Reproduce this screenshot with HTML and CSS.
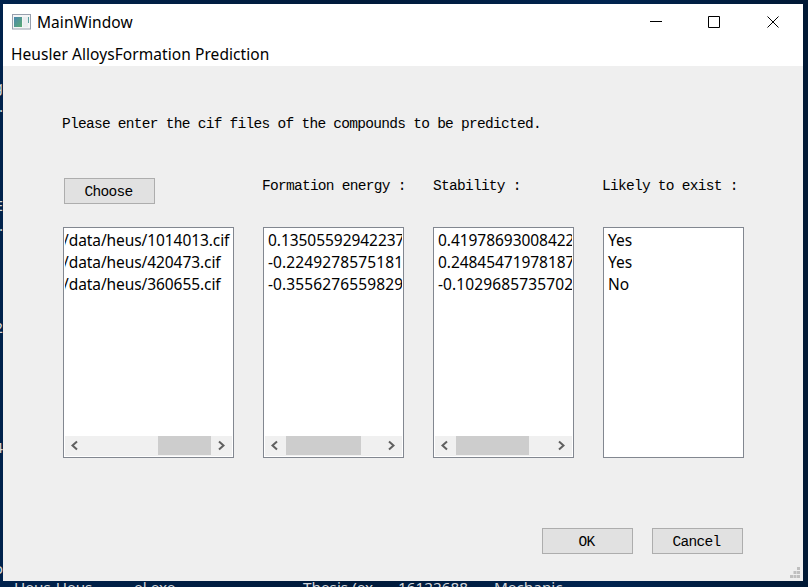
FILE: index.html
```html
<!DOCTYPE html>
<html lang="en">
<head>
<meta charset="utf-8">
<title>MainWindow</title>
<link rel="stylesheet" href="styles.css">
</head>
<body>
<div class="desk" aria-hidden="true">
  <span class="edge e1">g</span><span class="edge e2">.</span>
  <span class="edge e3">E</span><span class="edge e4">.</span>
  <span class="edge e5">2</span><span class="edge e6">4</span>
  <span class="edge e7">o</span>
  <span class="file f1">Heus-Heus</span>
  <span class="file f2">el.exe</span>
  <span class="file f3">Thesis (ex</span>
  <span class="file f4">16122688</span>
  <span class="file f5">Mechanic</span>
</div>
<main class="window">
  <header class="titlebar">
    <svg class="appicon" width="19" height="16" viewBox="0 0 19 16">
      <defs><linearGradient id="g" x1="0" y1="0" x2="1" y2="1"><stop offset="0" stop-color="#4a86b0"/><stop offset="1" stop-color="#5aab72"/></linearGradient></defs>
      <rect x=".5" y=".5" width="18" height="14.5" fill="#f4f5f6" stroke="#98a0ae"/>
      <rect x="2" y="3" width="8" height="10" fill="url(#g)"/>
      <rect x="11" y="3" width="5" height="10" fill="#e9edef"/>
      <rect x="16" y="3" width="1" height="6" fill="#5c9fa0"/>
    </svg>
    <span class="title">MainWindow</span>
    <svg class="controls" width="130" height="14" viewBox="0 0 130 14" fill="none" stroke="#000">
      <path d="M0 6.5h12M58.5 1.5h11v11h-11z"/>
      <path d="M117.500 1.500l11 11M128.500 1.500l-11 11"/>
    </svg>
  </header>
  <nav class="menu">Heusler AlloysFormation Prediction</nav>
  <section class="content">
    <p class="prompt">Please enter the cif files of the compounds to be predicted.</p>
    <div class="columns">
      <div class="col">
        <div class="head"><button class="btn">Choose</button></div>
        <div class="list">
          <div class="rows paths"><div>/data/heus/1014013.cif</div><div>/data/heus/420473.cif</div><div>/data/heus/360655.cif</div></div>
          <div class="scroll">
            <svg class="arrow" viewBox="0 0 21 20"><path d="M12 5.500L7.500 9.500l4.500 4"/></svg>
            <div class="track"><div class="thumb t1"></div></div>
            <svg class="arrow" viewBox="0 0 21 20"><path d="M8 5.500L12.500 9.500 8 13.500"/></svg>
          </div>
        </div>
      </div>
      <div class="col">
        <div class="head">Formation energy :</div>
        <div class="list">
          <div class="rows"><div>0.13505592942237</div><div class="neg">-0.2249278575181</div><div class="neg">-0.3556276559829</div></div>
          <div class="scroll">
            <svg class="arrow" viewBox="0 0 21 20"><path d="M12 5.500L7.500 9.500l4.500 4"/></svg>
            <div class="track"><div class="thumb t2"></div></div>
            <svg class="arrow" viewBox="0 0 21 20"><path d="M8 5.500L12.500 9.500 8 13.500"/></svg>
          </div>
        </div>
      </div>
      <div class="col">
        <div class="head shift">Stability :</div>
        <div class="list">
          <div class="rows"><div>0.41978693008422</div><div>0.24845471978187</div><div class="neg">-0.1029685735702</div></div>
          <div class="scroll">
            <svg class="arrow" viewBox="0 0 21 20"><path d="M12 5.500L7.500 9.500l4.500 4"/></svg>
            <div class="track"><div class="thumb t3"></div></div>
            <svg class="arrow" viewBox="0 0 21 20"><path d="M8 5.500L12.500 9.500 8 13.500"/></svg>
          </div>
        </div>
      </div>
      <div class="col">
        <div class="head">Likely to exist :</div>
        <div class="list"><div class="rows"><div>Yes</div><div>Yes</div><div>No</div></div></div>
      </div>
    </div>
    <div class="actions"><button class="btn">OK</button><button class="btn">Cancel</button></div>
  </section>
  <svg class="grip" width="10" height="11" viewBox="0 0 10 11" fill="#bfbfbf">
    <path d="M7 0h3v3H7zM7 4h3v3H7zM7 8h3v3H7zM3.500 4h3v3h-3zM3.500 8h3v3h-3zM0 8h3v3H0z"/>
  </svg>
</main>
</body>
</html>
```
FILE: styles.css
```css
* { box-sizing: border-box; }
body {
  margin: 0;
  width: 808px;
  height: 587px;
  padding: 4px 5px 6px 3px;
  overflow: hidden;
  position: relative;
  background: linear-gradient(90deg, #00224c 0, #001a3a 45%, #002450 75%, #001834 100%);
  font-family: "Noto Sans", "Open Sans", sans-serif;
  font-size: 15.5px;
  color: #000;
}
.desk { position: absolute; inset: 0; overflow: hidden; color: #d5d8dc; font-size: 15.3px; }
.edge, .file { position: absolute; line-height: 20px; white-space: nowrap; }
.edge { right: 805px; }
.e1 { top: 76px; } .e2 { top: 96px; }
.e3 { top: 195px; } .e4 { top: 215px; }
.e5 { top: 317px; } .e6 { top: 437px; } .e7 { top: 558px; }
.file { top: 577px; }
.f1 { left: 14px; } .f2 { left: 134px; } .f3 { left: 303px; }
.f4 { left: 398px; } .f5 { left: 494px; }

.window {
  position: relative;
  width: 800px;
  height: 577px;
  background: #efefef;
  display: flex;
  flex-direction: column;
}
.titlebar {
  height: 37px;
  flex: none;
  display: flex;
  align-items: center;
  padding: 0 23px 0 9px;
  background: #fff;
}
.appicon { margin-top: -1px; }
.title { margin: -2px 0 0 6px; letter-spacing: 0.05px; }
.controls { margin-left: auto; margin-top: -1px; }
.menu {
  height: 25px;
  flex: none;
  padding-left: 8px;
  line-height: 27px;
  background: #fff;
  white-space: nowrap;
  letter-spacing: 0.07px;
}
.content { flex: 1; padding: 48px 60px 0 59px; }
.prompt, .head, .btn {
  font-family: "Liberation Mono", monospace;
  font-size: 14.5px;
  letter-spacing: -0.72px;
}
.prompt { margin: 0; line-height: 20px; white-space: nowrap; }
.columns {
  display: grid;
  grid-template-columns: 171px 141px 141px 141px;
  column-gap: 29px;
  margin: 44px 0 0 1px;
}
.head { height: 49px; line-height: 17px; margin-left: -1px; white-space: nowrap; }
.shift { margin-left: 0; }
.btn {
  display: block;
  width: 91px;
  height: 26px;
  padding: 2px 2px 0 0;
  border: 1px solid #adadad;
  background: #e1e1e1;
  color: #000;
  text-align: center;
}
.head .btn { margin-left: 2px; }
.list {
  height: 231px;
  border: 1px solid #828790;
  padding: 1px;
  background: #fff;
  display: flex;
  flex-direction: column;
}
.rows {
  flex: 1;
  line-height: 22px;
  padding-left: 3px;
  overflow: hidden;
  white-space: nowrap;
  letter-spacing: -0.05px;
}
.neg { letter-spacing: 0.12px; }
.paths { padding-left: 0; letter-spacing: -0.08px; }
.paths div { margin-left: -2px; }
.scroll { display: flex; height: 20px; background: #f0f0f0; }
.arrow { width: 21px; height: 20px; flex: none; fill: none; stroke: #606060; stroke-width: 2; }
.track { flex: 1; }
.thumb { height: 19px; background: #cdcdcd; }
.t1 { width: 53px; margin-left: auto; }
.t2 { width: 75px; }
.t3 { width: 73px; }
.actions { display: flex; justify-content: flex-end; gap: 19px; margin-top: 70px; }
.grip { position: absolute; right: 3px; bottom: 3px; }
```
